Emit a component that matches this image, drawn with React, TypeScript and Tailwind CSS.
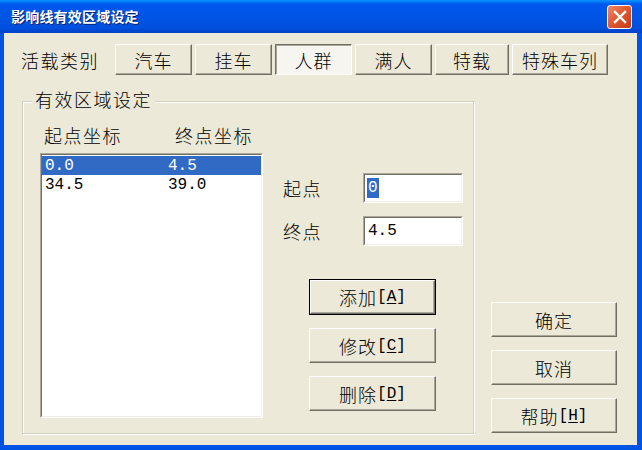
import React from "react";

const cjk = { fontFamily: '"Noto Sans CJK SC", "Noto Sans", sans-serif' };
const mono = { fontFamily: '"Liberation Mono", "DejaVu Sans Mono", monospace' };

function Btn({
  children,
  w,
  h,
  pressed,
  def,
}: {
  children: React.ReactNode;
  w: string;
  h: string;
  pressed?: boolean;
  def?: boolean;
}) {
  if (pressed) {
    return (
      <div
        className={`${w} ${h} flex items-center justify-center border border-t-[#716f64] border-l-[#716f64] border-r-white border-b-white bg-[#f6f5f0] shadow-[inset_1px_1px_0_#aca899] text-[18px] font-light tracking-[1px] text-black leading-none`}
        style={cjk}
      >
        {children}
      </div>
    );
  }
  const inner = (
    <div
      className={`flex h-full w-full items-center justify-center border border-t-white border-l-white border-r-[#716f64] border-b-[#716f64] bg-[#ece9d8] shadow-[inset_-1px_-1px_0_#aca899] text-[18px] font-light tracking-[1px] text-black leading-none`}
      style={cjk}
    >
      {children}
    </div>
  );
  if (def) {
    return <div className={`${w} ${h} border border-black`}>{inner}</div>;
  }
  return <div className={`${w} ${h}`}>{inner}</div>;
}

function Sunken({ className, children }: { className: string; children?: React.ReactNode }) {
  return (
    <div className={`${className} border border-t-[#aca899] border-l-[#aca899] border-r-white border-b-white`}>
      <div className="h-full w-full border border-t-[#716f64] border-l-[#716f64] border-r-[#f1efe2] border-b-[#f1efe2] bg-white">
        {children}
      </div>
    </div>
  );
}

function Acc({ label, k }: { label: string; k: string }) {
  return (
    <span className="flex items-center">
      <span>{label}</span>
      <span className="tracking-normal" style={{ fontFamily: '"Liberation Mono", monospace', fontSize: 16 }}>
        [<span className="underline underline-offset-2">{k}</span>]
      </span>
    </span>
  );
}

export default function App() {
  return (
    <div className="flex h-[450px] w-[642px] flex-col bg-[#0054e3]" style={cjk}>
      {/* Title bar */}
      <div className="flex h-[33px] shrink-0 items-center justify-between bg-[linear-gradient(to_bottom,#0997ff_0%,#0058ee_12%,#0055e5_50%,#0050dc_85%,#0040c8_100%)] pl-[11px] pr-[10px]">
        <span
          className="text-[14px] font-bold tracking-[0.2px] text-white [text-shadow:1px_1px_0_#0a1e6e]"
          style={cjk}
        >
          影响线有效区域设定
        </span>
        <div className="flex h-[24px] w-[25px] items-center justify-center rounded-[3px] border border-white bg-[linear-gradient(135deg,#f08a68_0%,#e05a32_45%,#c43c14_100%)]">
          <svg width="14" height="14" viewBox="0 0 14 14">
            <path d="M2 2 L12 12 M12 2 L2 12" stroke="white" strokeWidth="2.4" strokeLinecap="square" />
          </svg>
        </div>
      </div>

      {/* Client area */}
      <div className="ml-[4px] mr-[5px] mb-[5px] flex flex-1 flex-col bg-[#ece9d8]">
        {/* Row of load types */}
        <div className="mt-[11px] flex items-center">
          <span className="ml-[17px] w-[94px] text-[18px] font-light text-black leading-none tracking-[1.5px]">活载类别</span>
          <div className="flex gap-[3px]">
            <Btn w="w-[77px]" h="h-[31px]">汽车</Btn>
            <Btn w="w-[77px]" h="h-[31px]">挂车</Btn>
            <Btn w="w-[77px]" h="h-[31px]" pressed>人群</Btn>
            <Btn w="w-[77px]" h="h-[31px]">满人</Btn>
            <Btn w="w-[74px]" h="h-[31px]">特载</Btn>
            <Btn w="w-[96px]" h="h-[31px]">特殊车列</Btn>
          </div>
        </div>

        <div className="flex">
          {/* Group box */}
          <div className="relative ml-[18px] mt-[26px] flex h-[333px] w-[452px] border border-[#d0d0bf] shadow-[inset_1px_1px_0_white,1px_1px_0_white] pl-[17px]">
            <span className="absolute left-[9px] top-[-12px] bg-[#ece9d8] px-[3px] text-[18px] font-light leading-none text-black tracking-[1.5px]">
              有效区域设定
            </span>
            {/* list column */}
            <div className="flex w-[223px] flex-col pt-[23px]">
              <div className="flex h-[20px] items-center text-[18px] font-light leading-none text-black tracking-[1.5px]">
                <span className="ml-[4px] w-[131px]">起点坐标</span>
                <span>终点坐标</span>
              </div>
              <Sunken className="mt-[8px] h-[265px] w-[223px]">
                <div className="pt-[1px] text-[16px] leading-none" style={mono}>
                  <div className="flex h-[19px] items-center bg-[#316ac5] text-white">
                    <span className="ml-[3px] w-[123px]">0.0</span>
                    <span>4.5</span>
                  </div>
                  <div className="flex h-[19px] items-center text-black">
                    <span className="ml-[3px] w-[123px]">34.5</span>
                    <span>39.0</span>
                  </div>
                </div>
              </Sunken>
            </div>
            {/* fields column */}
            <div className="flex flex-col pt-[71px]">
              <div className="flex h-[30px] items-center">
                <span className="ml-[20px] w-[80px] text-[18px] font-light leading-none text-black tracking-[1.5px]">起点</span>
                <Sunken className="h-[30px] w-[100px]">
                  <div className="flex h-full items-center pl-[2px] text-[16px] leading-none" style={mono}>
                    <span className="bg-[#316ac5] px-[1px] py-[2px] text-white">0</span>
                  </div>
                </Sunken>
              </div>
              <div className="mt-[13px] flex h-[30px] items-center">
                <span className="ml-[20px] w-[80px] text-[18px] font-light leading-none text-black tracking-[1.5px]">终点</span>
                <Sunken className="h-[30px] w-[100px]">
                  <div className="flex h-full items-center pl-[3px] text-[16px] leading-none text-black" style={mono}>
                    4.5
                  </div>
                </Sunken>
              </div>
              <div className="ml-[46px] mt-[33px] flex flex-col gap-[13px]">
                <Btn w="w-[127px]" h="h-[36px]" def>
                  <Acc label="添加" k="A" />
                </Btn>
                <Btn w="w-[127px]" h="h-[35px]">
                  <Acc label="修改" k="C" />
                </Btn>
                <Btn w="w-[127px]" h="h-[35px]">
                  <Acc label="删除" k="D" />
                </Btn>
              </div>
            </div>
          </div>

          {/* Right buttons */}
          <div className="ml-[17px] mt-[227px] flex flex-col gap-[13px]">
            <Btn w="w-[126px]" h="h-[35px]">确定</Btn>
            <Btn w="w-[126px]" h="h-[35px]">取消</Btn>
            <Btn w="w-[126px]" h="h-[35px]">
              <Acc label="帮助" k="H" />
            </Btn>
          </div>
        </div>
      </div>
    </div>
  );
}
